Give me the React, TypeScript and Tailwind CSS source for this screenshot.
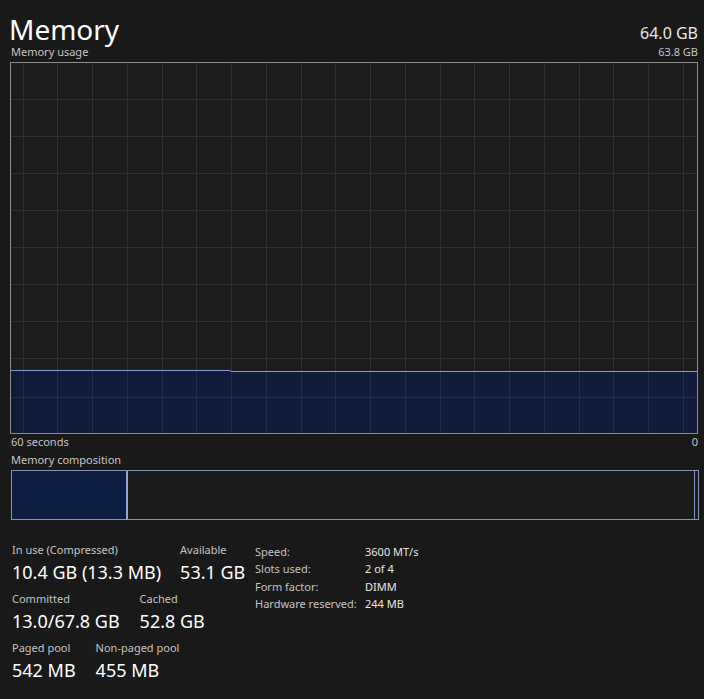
import React from "react";

const W = 686;
const H = 370;

function UsageChart() {
  const cols: number[] = [];
  for (let x = 12.5; x < W; x += 34.75) cols.push(Math.round(x) + 0.5);
  const rows: number[] = [];
  for (let i = 1; i < 10; i++) rows.push(Math.round((H / 10) * i) + 0.5);
  return (
    <svg width={W + 2} height={H + 2} className="block">
      <rect x="0.5" y="0.5" width={W + 1} height={H + 1} fill="#1c1c1c" stroke="#8c8c8c" />
      {cols.map((x) => (
        <line key={"c" + x} x1={x} y1={1} x2={x} y2={H + 1} stroke="#303030" />
      ))}
      {rows.map((y) => (
        <line key={"r" + y} x1={1} y1={y} x2={W + 1} y2={y} stroke="#303030" />
      ))}
      <path d={`M1 308.5 L219 308.5 L222 309.5 L${W + 1} 309.5 L${W + 1} ${H + 1} L1 ${H + 1} Z`} fill="#0e1b3c" fillOpacity="0.92" />
      {cols.map((x) => (
        <line key={"d" + x} x1={x} y1={310} x2={x} y2={H + 1} stroke="#1f2d4f" />
      ))}
      <line x1={1} y1={335.5} x2={W + 1} y2={335.5} stroke="#1f2d4f" />
      <path d={`M1 308.5 L219 308.5 L222 309.5 L${W + 1} 309.5`} fill="none" stroke="#7f9fd6" />
      <rect x="0.5" y="0.5" width={W + 1} height={H + 1} fill="none" stroke="#8c8c8c" />
    </svg>
  );
}

function Stat({ label, value }: { label: string; value: string }) {
  return (
    <div className="flex flex-col">
      <span className="text-[11px] leading-[14px] text-[#c4c4c4]">{label}</span>
      <span className="mt-[3px] text-[18px] leading-[24px] text-white">{value}</span>
    </div>
  );
}

export default function App() {
  const specs = [
    ["Speed:", "3600 MT/s"],
    ["Slots used:", "2 of 4"],
    ["Form factor:", "DIMM"],
    ["Hardware reserved:", "244 MB"],
  ];
  return (
    <div
      className="h-[699px] w-[704px] overflow-hidden bg-[#191919] text-white"
      style={{ fontFamily: '"Noto Sans", "Open Sans", sans-serif' }}
    >
      <div className="flex items-end justify-between pl-[9px] pr-[6px] pt-[14px]">
        <h1 className="text-[28px] leading-[30px] font-normal">Memory</h1>
        <span className="mb-[1px] text-[16px] leading-[20px] text-[#e6e6e6]">64.0 GB</span>
      </div>
      <div className="mt-[1px] flex justify-between pl-[11px] pr-[6px] text-[11px] leading-[14px] text-[#c4c4c4]">
        <span>Memory usage</span>
        <span>63.8 GB</span>
      </div>
      <div className="ml-[10px] mt-[3px]">
        <UsageChart />
      </div>
      <div className="flex justify-between pl-[11px] pr-[6px] pt-[1px] text-[11px] leading-[14px] text-[#c4c4c4]">
        <span>60 seconds</span>
        <span>0</span>
      </div>
      <div className="pl-[11px] pt-[4px] text-[11px] leading-[14px] text-[#c4c4c4]">Memory composition</div>
      <div className="ml-[11px] mt-[3px] flex h-[50px] w-[688px] border border-[#8593b8] bg-[#1a1a1a]">
        <div className="w-[114px] bg-[#0f1d42]" />
        <div className="w-[2px] bg-[#8fa6d8]" />
        <div className="flex-1 border-r border-[#8593b8]" />
        <div className="w-[3px]" />
      </div>
      <div className="flex pl-[12px] pt-[23px]">
        <div className="flex w-[243px] flex-col gap-[8px]">
          <div className="flex gap-[19px]">
            <Stat label="In use (Compressed)" value="10.4 GB (13.3 MB)" />
            <Stat label="Available" value="53.1 GB" />
          </div>
          <div className="flex gap-[20px]">
            <Stat label="Committed" value="13.0/67.8 GB" />
            <Stat label="Cached" value="52.8 GB" />
          </div>
          <div className="flex gap-[20px]">
            <Stat label="Paged pool" value="542 MB" />
            <Stat label="Non-paged pool" value="455 MB" />
          </div>
        </div>
        <div className="flex flex-col text-[11px] leading-[17.4px]">
          {specs.map(([k, v]) => (
            <div key={k} className="flex">
              <span className="w-[110px] text-[#c4c4c4]">{k}</span>
              <span className="text-[#e6e6e6]">{v}</span>
            </div>
          ))}
        </div>
      </div>
    </div>
  );
}
